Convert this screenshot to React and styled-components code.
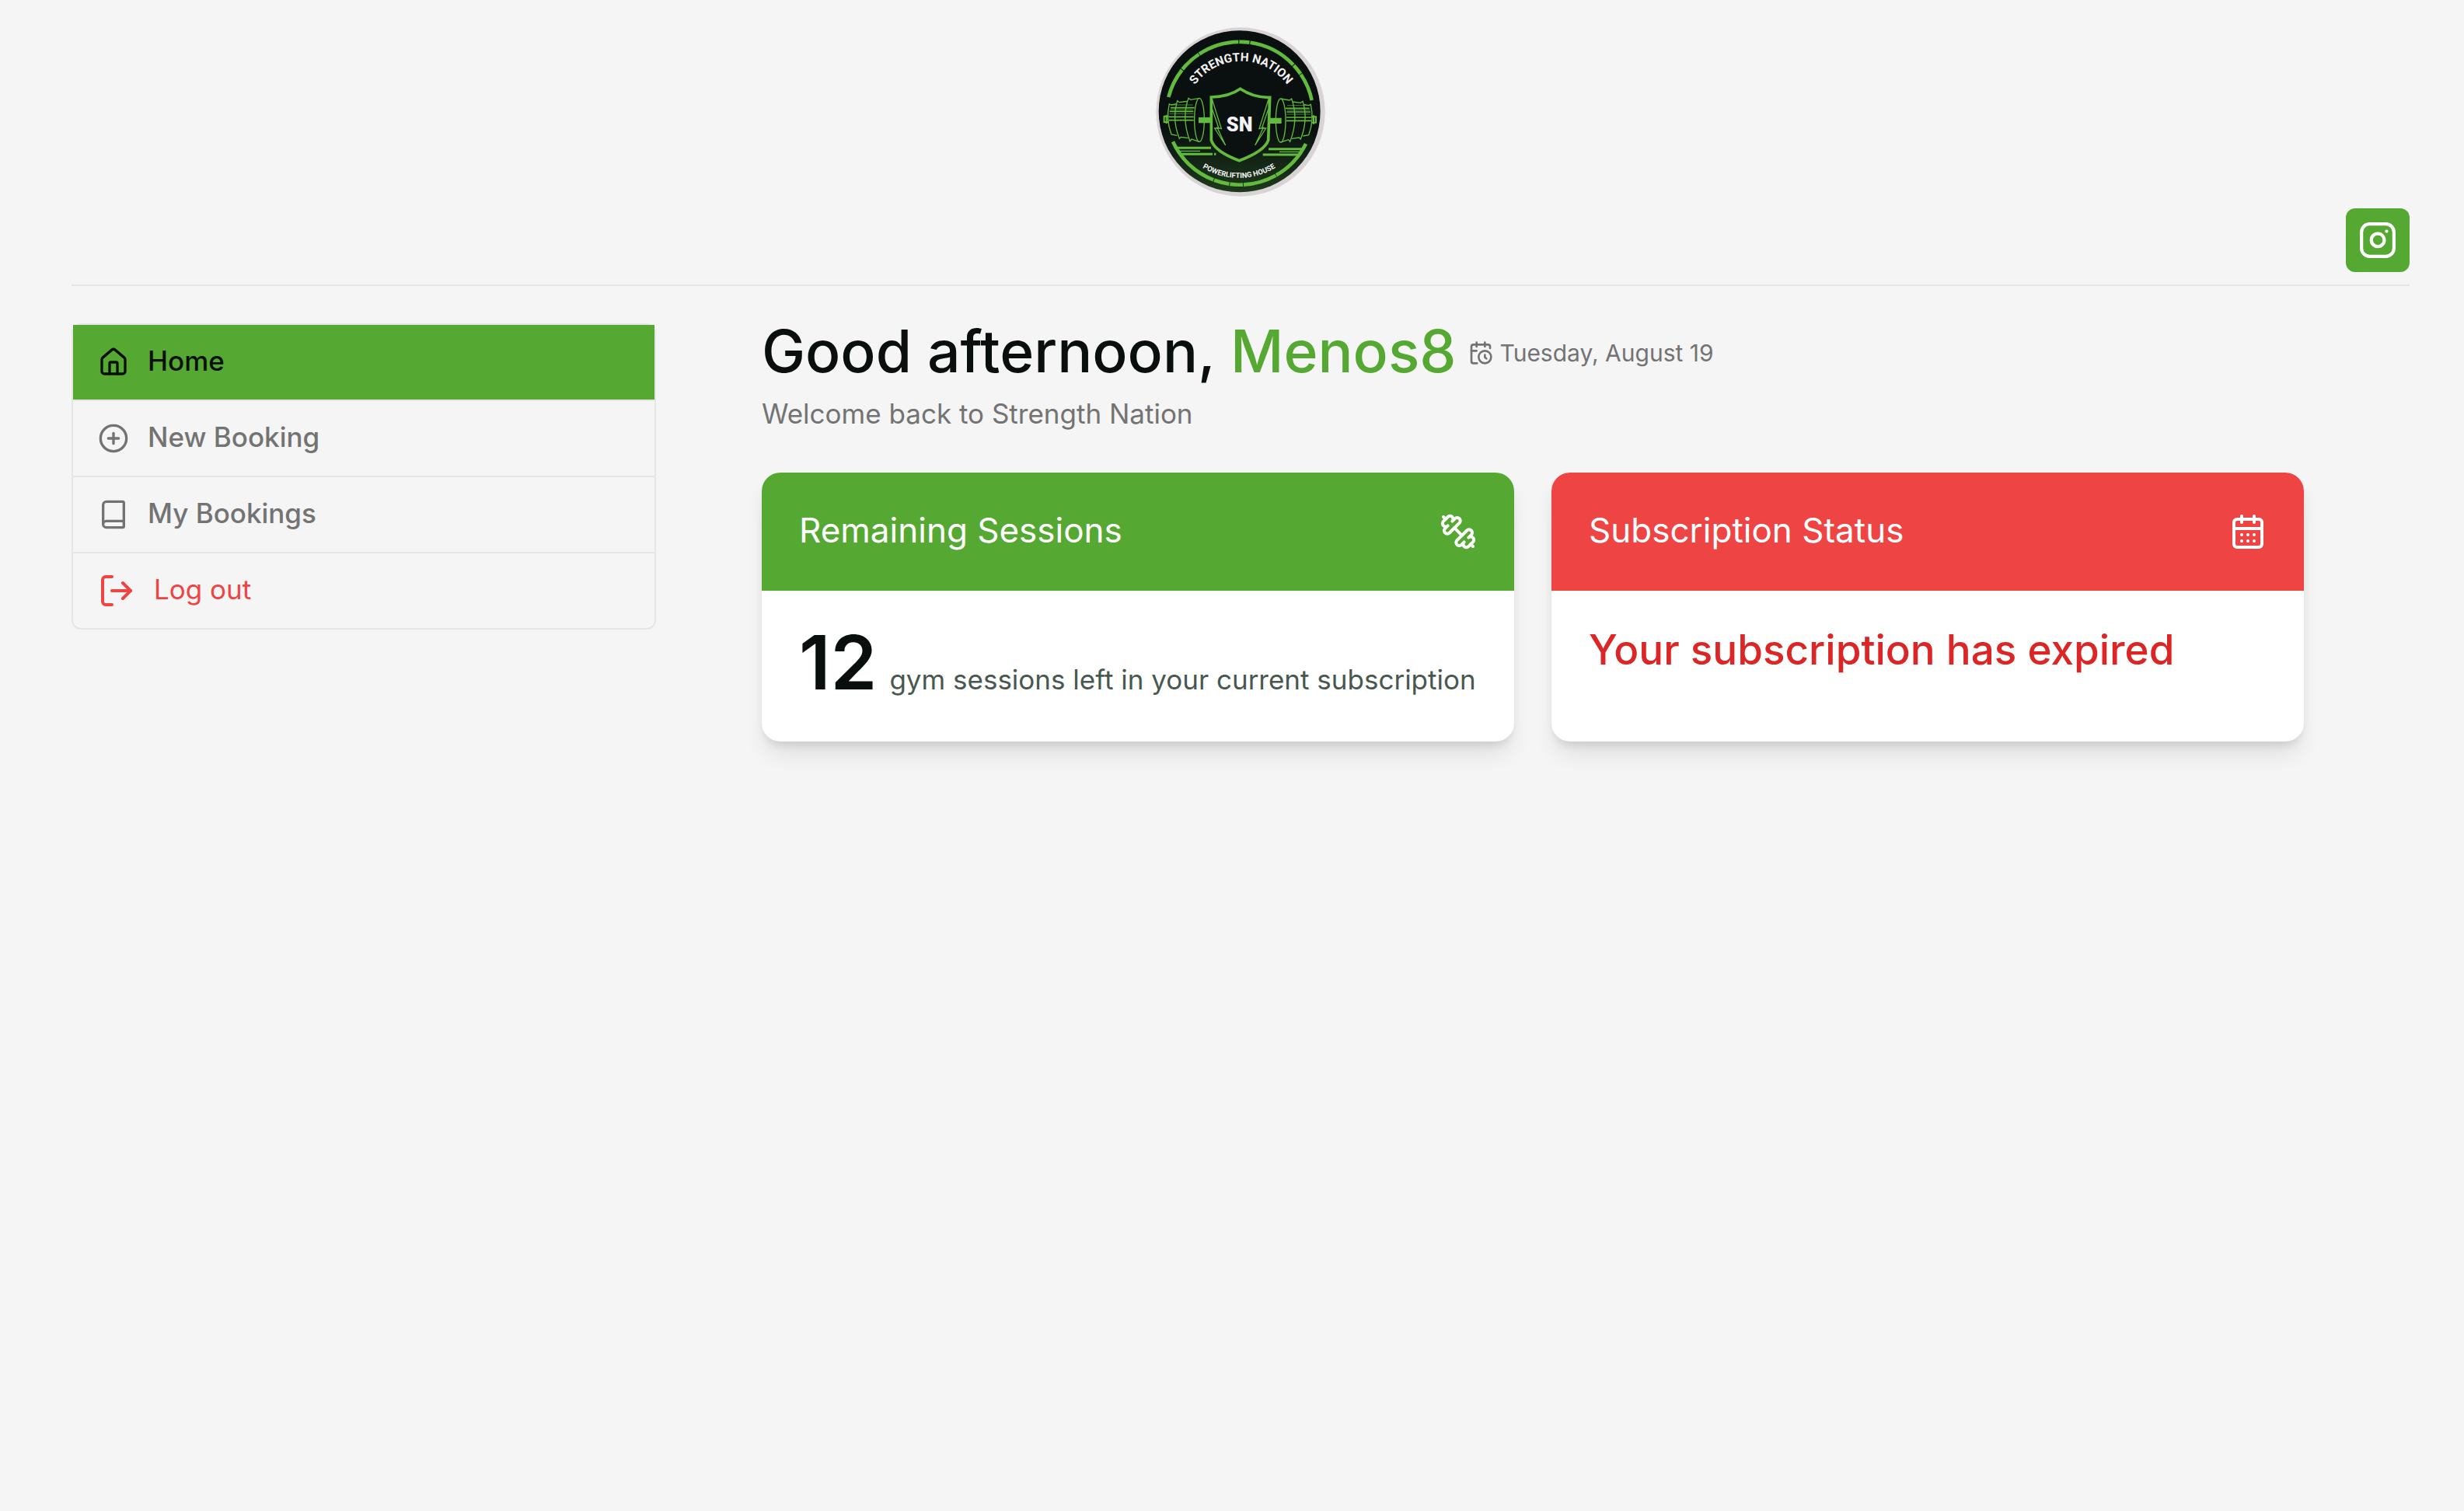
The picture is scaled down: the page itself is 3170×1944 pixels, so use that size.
import React from "react";
import styled, { createGlobalStyle } from "styled-components";
import { House, CirclePlus, Book, LogOut, Instagram, CalendarDays } from "lucide-react";

const color = {
  page: "#f5f5f5",
  ink: "#0a0f0d",
  muted: "#737373",
  soft: "#485851",
  line: "#e5e5e5",
  green: "#55a932",
  red: "#ef4444",
  redDeep: "#dc2626",
};

const GlobalStyle = createGlobalStyle`
  *, *::before, *::after { box-sizing: border-box; }
  body {
    margin: 0;
    background: ${color.page};
    color: ${color.ink};
    font-family: Inter, "Noto Sans", sans-serif;
    font-size: 35px;
    line-height: 48px;
  }
  h1, h2, p, ul { margin: 0; padding: 0; font-weight: 400; }
  svg { display: block; flex: none; }
`;

const Page = styled.div`
  padding: 35px 70px 48px 92px;
`;

const Header = styled.header`
  display: flex;
  flex-direction: column;
  align-items: center;
  gap: 15px;
  padding-bottom: 16px;
  border-bottom: 2px solid ${color.line};
`;

const LogoLink = styled.a`
  display: block;
`;

const SocialLink = styled.a`
  align-self: flex-end;
  padding: 16px;
  border-radius: 12px;
  background: ${color.green};
  color: #fff;
`;

const Layout = styled.div`
  display: grid;
  grid-template-columns: minmax(0, 1fr) minmax(0, 3fr);
  align-items: start;
  padding-top: 48px;
`;

const Menu = styled.ul`
  list-style: none;
  border: 2px solid ${color.line};
  border-radius: 12px;
`;

const MenuRow = styled.li`
  & + & { border-top: 2px solid ${color.line}; }
`;

const MenuItem = styled.a`
  display: flex;
  align-items: center;
  gap: 24px;
  width: 100%;
  height: 96px;
  padding: 0 32px;
  border: 0;
  background: ${(p) => (p.$active ? color.green : "transparent")};
  color: ${(p) => (p.$danger ? color.red : p.$active ? color.ink : color.muted)};
  font-family: inherit;
  font-size: 35px;
  font-weight: ${(p) => (p.$danger ? 400 : 500)};
  line-height: 48px;
  text-decoration: none;
  cursor: pointer;
`;

const MenuLabel = styled.span`
  padding-bottom: 4px;
`;

const Main = styled.main`
  padding: 0 136px;
`;

const Greeting = styled.div`
  display: flex;
  flex-wrap: wrap;
  align-items: center;
  gap: 16px;
  margin-bottom: 20px;
`;

const Title = styled.h1`
  font-size: 75px;
  font-weight: 500;
  line-height: 72px;
`;

const UserName = styled.span`
  color: ${color.green};
`;

const Today = styled.div`
  display: flex;
  align-items: center;
  gap: 8px;
  padding-top: 4px;
  color: ${color.muted};
  font-size: 30px;
  line-height: 40px;
`;

const Welcome = styled.p`
  color: ${color.muted};
`;

const Cards = styled.div`
  display: grid;
  grid-template-columns: repeat(2, minmax(0, 1fr));
  gap: 48px;
  margin-top: 52px;
`;

const Card = styled.section`
  overflow: hidden;
  border-radius: 24px;
  background: #fff;
  box-shadow: 0 20px 30px -6px rgba(0, 0, 0, 0.1), 0 8px 12px -4px rgba(0, 0, 0, 0.1);
`;

const CardHead = styled.div`
  display: flex;
  align-items: center;
  justify-content: space-between;
  height: 152px;
  padding: 0 48px;
  background: ${(p) => (p.$expired ? color.red : color.green)};
  color: #fff;
`;

const CardTitle = styled.h2`
  padding-bottom: 4px;
  font-size: 44px;
  line-height: 56px;
`;

const CardBody = styled.div`
  padding: 48px 48px 56px;
`;

const Sessions = styled.p`
  display: flex;
  align-items: baseline;
  gap: 16px;
  color: ${color.soft};
  white-space: nowrap;
`;

const Count = styled.strong`
  color: ${color.ink};
  font-size: 96px;
  font-weight: 600;
  line-height: 88px;
`;

const Expired = styled.p`
  color: ${color.redDeep};
  font-size: 53px;
  font-weight: 500;
  line-height: 56px;
`;

function LineIcon({ size, children }) {
  return (
    <svg width={size} height={size} viewBox="0 0 24 24" fill="none" stroke="currentColor" strokeWidth="2" strokeLinecap="round" strokeLinejoin="round" aria-hidden="true">
      {children}
    </svg>
  );
}

function CalendarClock({ size }) {
  return (
    <LineIcon size={size}>
      <path d="M21 7.5V6a2 2 0 0 0-2-2H5a2 2 0 0 0-2 2v14a2 2 0 0 0 2 2h3.5" />
      <path d="M16 2v4M8 2v4M3 10h5" />
      <path d="M17.5 17.5 16 16.3V14" />
      <circle cx="16" cy="16" r="6" />
    </LineIcon>
  );
}

function Dumbbell({ size }) {
  return (
    <LineIcon size={size}>
      <path d="M14.4 14.4 9.6 9.6" />
      <path d="M18.657 21.485a2 2 0 1 1-2.829-2.828l-1.767 1.768a2 2 0 1 1-2.829-2.829l6.364-6.364a2 2 0 1 1 2.829 2.829l-1.768 1.767a2 2 0 1 1 2.828 2.829z" />
      <path d="m21.5 21.5-1.4-1.4" />
      <path d="M3.9 3.9 2.5 2.5" />
      <path d="M6.404 12.768a2 2 0 1 1-2.829-2.829l1.768-1.767a2 2 0 1 1-2.828-2.829l2.828-2.828a2 2 0 1 1 2.829 2.828l1.767-1.768a2 2 0 1 1 2.829 2.829z" />
    </LineIcon>
  );
}

function Weights() {
  return (
    <g fill="none" stroke="#62bb3c" strokeWidth="4">
      <path d="M220 396h42v18h-42z" fill="#62bb3c" />
      <ellipse cx="221" cy="404" rx="19" ry="84" />
      <path d="M221 320l-34 6-8-6q-28 78 6 166l6-8 30 10" />
      <path d="M174 332l-30 4-8-6q-22 70 8 146l6-6 28 4" />
      <path d="M132 342l-20 4-7-4q-14 60 8 118l22 4" />
      <path d="M102 390H85v22h17M94 384v34" strokeWidth="6" />
      <path d="M110 357h92M106 371h92M103 392h96M103 405h96" strokeWidth="5" />
      <path d="M112 346h84M108 364h88M106 380h92" strokeWidth="2" />
    </g>
  );
}

function Bolt() {
  return (
    <path d="M270 324l36 114-16-4 32 68-42-66h16l-26-76z" fill="#0b1010" stroke="#62bb3c" strokeWidth="4" />
  );
}

function Logo() {
  return (
    <svg width="218" height="218" viewBox="53 46 654 654" role="img" aria-label="Strength Nation Powerlifting House">
      <defs>
        <linearGradient id="face" x1="0" y1="0" x2="0" y2="1">
          <stop offset="0.6" stopColor="#0a0f10" />
          <stop offset="1" stopColor="#1d3a1c" />
        </linearGradient>
        <path id="arcTop" d="M176 322A219 219 0 0 1 588 322" />
        <path id="arcBottom" d="M182 548A271 271 0 0 0 566 548" />
      </defs>
      <circle cx="380" cy="373" r="326" fill="#d8d4d5" />
      <circle cx="376" cy="371" r="312" fill="url(#face)" />
      <g fill="none" stroke="#62bb3c">
        <path d="M102 316A284 284 0 0 1 655 328" strokeWidth="14" strokeDasharray="118 3 86 2 160 3 40 3 190 3 42 2" />
        <path d="M119 488A284 284 0 0 0 632 496" strokeWidth="14" strokeDasharray="220 3 60 3 50 3 130 2" />
        <path d="M132 512h134M148 536h124M278 536h7M488 516h132M466 538h144" strokeWidth="9" />
        <path d="M140 524h84M530 527h84" strokeWidth="4" />
      </g>
      <Weights />
      <g transform="translate(756 2) scale(-1 1)">
        <Weights />
      </g>
      <path d="M379 284q-44 31-112 32v166q14 44 108 79 98-37 112-79l6-165q-62 2-114-33z" fill="#0b1010" stroke="#62bb3c" strokeWidth="11" />
      <Bolt />
      <g transform="translate(758 0) scale(-1 1)">
        <Bolt />
      </g>
      <g fill="#f4f2f3" fontFamily="Roboto, 'Liberation Sans', sans-serif" fontWeight="700" textAnchor="middle">
        <text fontSize="46">
          <textPath href="#arcTop" startOffset="50%">STRENGTH NATION</textPath>
        </text>
        <text fontSize="28">
          <textPath href="#arcBottom" startOffset="50%">POWERLIFTING HOUSE</textPath>
        </text>
        <text x="376" y="447" fontSize="76" fontWeight="900">SN</text>
      </g>
    </svg>
  );
}

export default function App() {
  return (
    <>
      <GlobalStyle />
      <Page>
        <Header>
          <LogoLink href="#home"><Logo /></LogoLink>
          <SocialLink href="#instagram" aria-label="Instagram"><Instagram size={50} /></SocialLink>
        </Header>
        <Layout>
          <nav aria-label="Account">
            <Menu>
              <MenuRow>
                <MenuItem href="#home" $active aria-current="page"><House size={40} /><MenuLabel>Home</MenuLabel></MenuItem>
              </MenuRow>
              <MenuRow>
                <MenuItem href="#new-booking"><CirclePlus size={40} /><MenuLabel>New Booking</MenuLabel></MenuItem>
              </MenuRow>
              <MenuRow>
                <MenuItem href="#my-bookings"><Book size={40} /><MenuLabel>My Bookings</MenuLabel></MenuItem>
              </MenuRow>
              <MenuRow>
                <MenuItem as="button" type="button" $danger><LogOut size={48} /><MenuLabel>Log out</MenuLabel></MenuItem>
              </MenuRow>
            </Menu>
          </nav>
          <Main>
            <Greeting>
              <Title>Good afternoon, <UserName>Menos8</UserName></Title>
              <Today><CalendarClock size={32} />Tuesday, August 19</Today>
            </Greeting>
            <Welcome>Welcome back to Strength Nation</Welcome>
            <Cards>
              <Card>
                <CardHead>
                  <CardTitle>Remaining Sessions</CardTitle>
                  <Dumbbell size={48} />
                </CardHead>
                <CardBody>
                  <Sessions><Count>12</Count>gym sessions left in your current subscription</Sessions>
                </CardBody>
              </Card>
              <Card>
                <CardHead $expired>
                  <CardTitle>Subscription Status</CardTitle>
                  <CalendarDays size={48} />
                </CardHead>
                <CardBody>
                  <Expired>Your subscription has expired</Expired>
                </CardBody>
              </Card>
            </Cards>
          </Main>
        </Layout>
      </Page>
    </>
  );
}
